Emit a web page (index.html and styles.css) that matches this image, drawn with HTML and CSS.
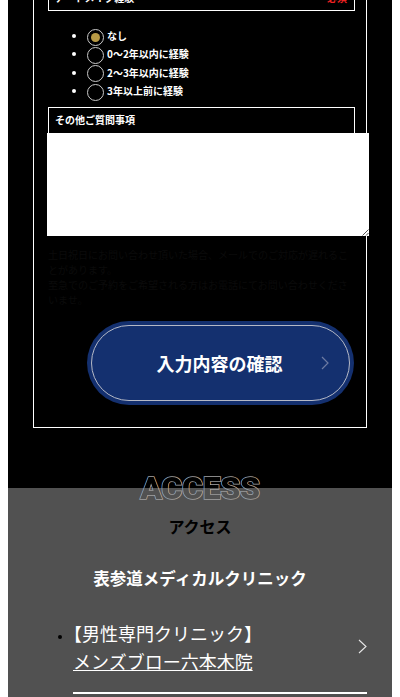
FILE: index.html
```html
<!DOCTYPE html>
<html lang="ja">
<head>
  <meta charset="UTF-8">
  <title>アクセス</title>
  <link rel="stylesheet" href="styles.css">
</head>
<body>

  <!-- Form -->
  <div class="form-area">
    <div class="form-box">
      <div class="field-head field-head-top">
        <span class="field-label">アートメイク経験</span>
        <span class="required">必須</span>
      </div>
      <ul class="radio-list">
        <li><span class="radio checked"></span>なし</li>
        <li><span class="radio"></span>0〜2年以内に経験</li>
        <li><span class="radio"></span>2〜3年以内に経験</li>
        <li><span class="radio"></span>3年以上前に経験</li>
      </ul>
      <div class="field-head field-head-other">
        <span class="field-label">その他ご質問事項</span>
      </div>
      <div class="textarea">
        <svg class="resizer" width="7" height="7" viewBox="0 0 7 7">
          <path d="M0.5 6.5 L6.5 0.5 M4 6.5 L6.5 4" stroke="#555" stroke-width="1" fill="none"/>
        </svg>
      </div>
      <p class="note">土日祝日にお問い合わせ頂いた場合、メールでのご対応が遅れることがあります。<br>至急でのご予約をご希望される方はお電話にてお問い合わせくださいませ。</p>
      <div class="submit-row">
        <div class="submit">
          <div class="submit-inner">
            入力内容の確認
            <svg class="submit-arrow" width="8" height="14" viewBox="0 0 8 14">
              <path d="M1 1 L7 7 L1 13" stroke="#6d7ba3" stroke-width="1.2" fill="none"/>
            </svg>
          </div>
        </div>
      </div>
    </div>
  </div>

  <!-- Access -->
  <div class="access">
    <div class="access-en" data-text="ACCESS">ACCESS</div>
    <h2 class="access-title">アクセス</h2>
    <h3 class="clinic-name">表参道メディカルクリニック</h3>
    <ul class="clinic-list">
      <li>
        <a href="#" class="clinic-link"><span class="bracket">【</span>男性専門クリニック<span class="bracket">】</span><br><u>メンズブロー六本木院</u></a>
        <svg class="clinic-arrow" width="9" height="15" viewBox="0 0 9 15">
          <path d="M1 1 L8 7.5 L1 14" stroke="#e8e8e8" stroke-width="1.1" fill="none"/>
        </svg>
      </li>
    </ul>
  </div>

</body>
</html>
```
FILE: styles.css
```css
html, body {
  height: 697px;
  overflow: hidden;
}

body {
  margin: 0;
  padding: 0 8px;
  background: #fff;
  font-family: "Noto Sans CJK JP", "Noto Sans", sans-serif;
}

/* Form */
.form-area {
  background: #000;
  height: 488px;
  padding: 0 25px;
  box-sizing: border-box;
}

.form-box {
  border: 1px solid #fff;
  border-top: none;
  height: 428px;
  box-sizing: border-box;
  padding: 0 11px 0 14px;
  color: #fff;
}

.field-head {
  border: 1px solid #fff;
  box-sizing: border-box;
  display: flex;
  justify-content: space-between;
  font-size: 10px;
  font-weight: bold;
  padding: 0 7px 0 6px;
}

.field-head-top {
  height: 11px;
  border-top: none;
  align-items: flex-end;
  overflow: hidden;
  line-height: 14px;
}

.field-head-top span {
  margin-bottom: 5px;
}

.field-head-other {
  height: 26px;
  margin-top: 7px;
  padding-bottom: 2px;
  align-items: center;
  border-bottom: none;
}

.required {
  color: #ee2222;
}

.radio-list {
  margin: 16px 0 0;
  padding: 0 0 0 39px;
  font-size: 10px;
  font-weight: bold;
}

.radio-list li {
  height: 18.3px;
  line-height: 18px;
}

.radio {
  display: inline-block;
  width: 17px;
  height: 17px;
  border: 1px solid #c8c8c8;
  border-radius: 50%;
  box-sizing: border-box;
  vertical-align: middle;
  margin-right: 3px;
  position: relative;
}

.radio.checked::after {
  content: "";
  position: absolute;
  left: 3px;
  top: 3px;
  width: 9px;
  height: 9px;
  border-radius: 50%;
  background: #b89a45;
}

.textarea {
  background: #fff;
  width: 322px;
  height: 103px;
  margin-left: -1px;
  position: relative;
}

.resizer {
  position: absolute;
  right: 0;
  bottom: 0;
}

.note {
  margin: 11px 0 0;
  font-size: 10px;
  line-height: 15px;
  color: #0b0b0b;
  width: 300px;
}

.submit-row {
  display: flex;
  justify-content: flex-end;
  margin: 14px 1px 0 0;
}

.submit {
  width: 267px;
  height: 84px;
  background: #14306f;
  border-radius: 42px;
  padding: 4px;
  box-sizing: border-box;
}

.submit-inner {
  height: 100%;
  padding-right: 2px;
  border: 1px solid #b5b9c6;
  border-radius: 38px;
  box-sizing: border-box;
  display: flex;
  align-items: center;
  justify-content: center;
  font-size: 18px;
  font-weight: bold;
  color: #fff;
  position: relative;
}

.submit-arrow {
  position: absolute;
  right: 20px;
  top: 30px;
}

/* Access */
.access {
  background: #515151;
  height: 209px;
  position: relative;
  text-align: center;
}

.access-en {
  position: absolute;
  left: 0;
  right: 0;
  top: -17px;
  font-family: Roboto, "Liberation Sans", sans-serif;
  font-size: 32px;
  font-weight: 900;
  line-height: 34px;
  letter-spacing: -0.3px;
  color: transparent;
  -webkit-text-stroke: 1.5px #a0a0a0;
}

/* same word on top, filled with the two backgrounds, so only the outer stroke shows */
.access-en::after {
  content: attr(data-text);
  position: absolute;
  left: 0;
  right: 0;
  top: 0;
  -webkit-text-stroke: 0;
  background: linear-gradient(#000 17px, #515151 17px);
  -webkit-background-clip: text;
  background-clip: text;
}

.access-title {
  margin: 0;
  padding-top: 26px;
  font-size: 16px;
  line-height: 24px;
  font-weight: bold;
  color: #000;
}

.clinic-name {
  margin: 28px 0 0;
  font-size: 16.5px;
  line-height: 24px;
  font-weight: bold;
  color: #fff;
}

.clinic-list {
  margin: 29px 25px 0;
  padding: 0 0 0 40px;
  text-align: left;
  font-size: 18px;
  line-height: 28px;
}

.clinic-list li {
  position: relative;
  height: 75px;
  border-bottom: 2px solid #fff;
  box-sizing: border-box;
}

.clinic-list li::marker {
  font-size: 11px;
}

.clinic-link {
  color: #fff;
  text-decoration: none;
}

.bracket {
  font-feature-settings: "halt";
}

.clinic-arrow {
  position: absolute;
  right: 0;
  top: 20px;
}
```
